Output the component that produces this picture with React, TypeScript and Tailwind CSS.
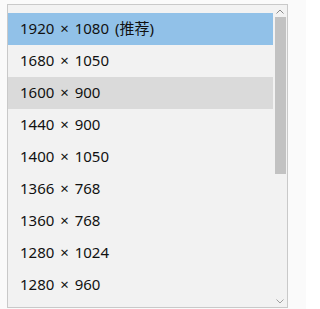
const items = [
  "1920 × 1080 (推荐)",
  "1680 × 1050",
  "1600 × 900",
  "1440 × 900",
  "1400 × 1050",
  "1366 × 768",
  "1360 × 768",
  "1280 × 1024",
  "1280 × 960",
];

const App = () => {
  return (
    <div className="h-[309px] w-[306px] bg-[#fafafa] pl-[7px] pt-[4px] overflow-hidden">
      <div
        className="flex h-[304px] w-[281px] border border-[#c9c9c9] bg-[#f2f2f2] overflow-hidden"
        style={{ fontFamily: '"Segoe UI", "Noto Sans", "Noto Sans CJK SC", sans-serif' }}
      >
        <div className="flex flex-1 flex-col pt-[8px]">
          {items.map((item, index) => (
            <div
              key={index}
              className={
                "flex h-[32px] shrink-0 items-center pb-[2px] pl-[12px] text-[15px] text-[#111] [word-spacing:2px]" +
                (index === 0 ? " bg-[#91c1e8]" : index === 2 ? " bg-[#dadada]" : "")
              }
            >
              {item}
            </div>
          ))}
        </div>
        <div className="flex w-[14px] flex-col items-center">
          <div className="flex h-[12px] w-full items-center justify-center">
            <svg width="8" height="5" viewBox="0 0 8 5" fill="none">
              <path d="M0.5 4.5L4 1L7.5 4.5" stroke="#8a8a8a" strokeWidth="1" />
            </svg>
          </div>
          <div className="h-[157px] w-[11px] bg-[#c2c2c2]"></div>
          <div className="flex-1"></div>
          <div className="flex h-[12px] w-full items-center justify-center">
            <svg width="8" height="5" viewBox="0 0 8 5" fill="none">
              <path d="M0.5 0.5L4 4L7.5 0.5" stroke="#a0a0a0" strokeWidth="1" />
            </svg>
          </div>
        </div>
      </div>
    </div>
  );
};

export default App;
